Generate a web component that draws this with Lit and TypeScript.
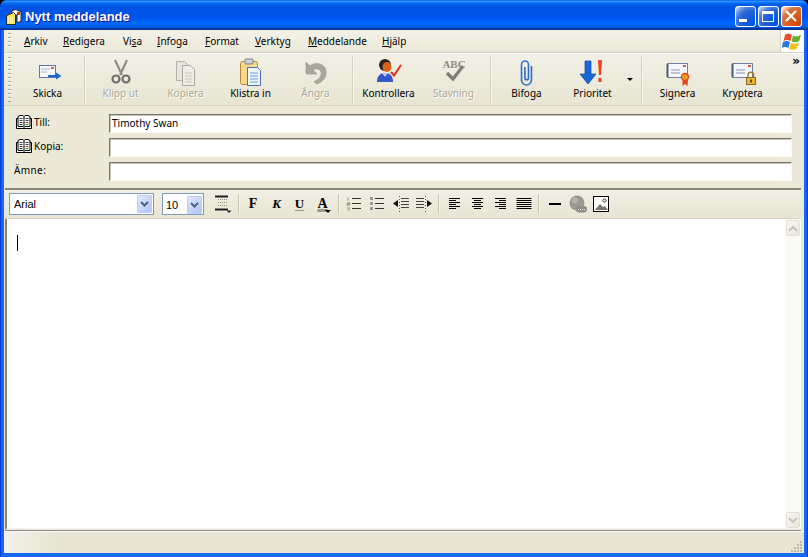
import { LitElement, html, css, svg } from "lit";
import { customElement } from "lit/decorators.js";

const send = svg`<rect x="6.500" y="7.500" width="16" height="12" fill="#f4f7fd" stroke="#5f76a8"/><path d="M8 11h9M8 14h6" stroke="#a9b8d4"/><rect x="18" y="9" width="3" height="2" fill="#d8643c"/><path d="M15 17h8v-2.500l5.500 3.500-5.500 3.500V19h-8z" fill="#1f69c8"/>`;
const cut = svg`<g fill="none" stroke="#8e8e86" stroke-width="2.200"><path d="M9 2l7 15M21 2l-7 15"/><circle cx="10" cy="21" r="3.500" stroke="#6f6f68"/><circle cx="20" cy="21" r="3.500" stroke="#6f6f68"/></g>`;
const copy = svg`<path d="M5.500 3.500h8l4 4v15h-12z" fill="#e8e6dc" stroke="#b5b3a8"/><path d="M11.500 7.500h8l4 4v16h-12z" fill="#efeee6" stroke="#a9a79c"/><path d="M14 15h7M14 18h7M14 21h7M14 24h7" stroke="#c4c2b8"/>`;
const paste = svg`<rect x="4.500" y="3.500" width="17" height="23" rx="2" fill="#f6d98a" stroke="#b58a3c"/><rect x="9" y="1" width="8" height="5" rx="1" fill="#cfd2d8" stroke="#7b7f86"/><path d="M11.500 9.500h10l3 3v15h-13z" fill="#eef4fd" stroke="#4d72b8"/><path d="M14 15h8M14 18h8M14 21h8M14 24h8" stroke="#6e9be0"/>`;
const undo = svg`<path d="M5 4v12h11l-4-4c3-2 7-1 8 2 1 4-2 7-7 10l3 2c7-3 10-8 9-13-1-7-10-10-16-5L5 4z" fill="#a9a89f" stroke="#96958c" stroke-width=".6"/>`;
const check = svg`<circle cx="11" cy="7" r="6" fill="#2b2320"/><ellipse cx="13" cy="9" rx="4.500" ry="5" fill="#d8641c"/><path d="M3 24c0-7 4-9 8-9s8 2 8 9z" fill="#3557c8"/><path d="M8 15l3 4 3-4z" fill="#b9c8f0"/><path d="M17 14l3 3.500L27 7" fill="none" stroke="#e8321c" stroke-width="2"/>`;
const spell = svg`<text x="15" y="10" text-anchor="middle" font-family="Liberation Serif" font-weight="700" font-size="11" fill="#8e8d84">ABC</text><path d="M8 15l6 6 10-13" fill="none" stroke="#7f7e76" stroke-width="3.200"/>`;
const attach = svg`<path d="M19.500 8v14a5 5 0 0 1-10 0V6.500a3.500 3.500 0 0 1 7 0V20a1.800 1.800 0 0 1-3.600 0V9" fill="none" stroke="#2e6fc8" stroke-width="1.600"/>`;
const prio = svg`<path d="M7 3h6v13h5l-8 10-8-10h5z" fill="#1668d4" stroke="#0d4aa0" stroke-width=".7"/><path d="M20 2h4l-1 15h-2z" fill="#f0401c"/><rect x="20.500" y="20" width="3" height="4" fill="#f0401c"/>`;
const sign = svg`<rect x="4.500" y="5.500" width="20" height="14" fill="#f4f7fd" stroke="#6d7e9e"/><path d="M4.500 6v13" stroke="#4a5a7a" stroke-width="2"/><path d="M8 12h9M8 15h9" stroke="#8c97ab"/><rect x="20" y="7" width="3" height="2" fill="#d8643c"/><path d="M19.500 22v6l2.500-2 2.500 2 .5-6z" fill="#e8461c"/><circle cx="22" cy="19" r="3.500" fill="#f2a01c" stroke="#e8461c" stroke-width="1.400"/>`;
const crypt = svg`<rect x="4.500" y="5.500" width="20" height="14" fill="#f4f7fd" stroke="#6d7e9e"/><path d="M4.500 6v13" stroke="#4a5a7a" stroke-width="2"/><path d="M8 12h9M8 15h9" stroke="#8c97ab"/><rect x="20" y="7" width="3" height="2" fill="#d8643c"/><path d="M20 20v-3a2.800 2.800 0 0 1 5.600 0v3" fill="none" stroke="#9a7a28" stroke-width="1.400"/><rect x="18.500" y="19.500" width="9" height="7" fill="#e8b830" stroke="#8a6a1c"/><rect x="22" y="21.500" width="2" height="3" fill="#6a4a0c"/>`;

const book = html`<svg class="book" viewBox="0 0 16 14"><path d="M.5 3.500h1.500v-2l2-1h3l1 1 1-1h3l2 1v2h1.500v10h-15z" fill="#fff" stroke="#000"/><path d="M8 1.500v10.500M2 3v8.500h5l1 1 1-1h5V3" fill="none" stroke="#000"/><path d="M3.500 3.500h3M3.500 5.500h3M3.500 7.500h3M3.500 9.500h3M9.500 3.500h3M9.500 5.500h3" stroke="#444"/><path d="M9.500 7.500h3" stroke="#e02020"/><path d="M9.500 9.500h3" stroke="#20a020"/></svg>`;

const tools = [
  { label: "Skicka", icon: send, on: true },
  { sep: true },
  { label: "Klipp ut", icon: cut },
  { label: "Kopiera", icon: copy },
  { label: "Klistra in", icon: paste, on: true },
  { label: "Ångra", icon: undo },
  { sep: true },
  { label: "Kontrollera", icon: check, on: true },
  { label: "Stavning", icon: spell },
  { sep: true },
  { label: "Bifoga", icon: attach, on: true },
  { label: "Prioritet", icon: prio, on: true, drop: true },
  { sep: true },
  { label: "Signera", icon: sign, on: true },
  { label: "Kryptera", icon: crypt, on: true },
] as any[];

const fmt = {
  para: svg`<path d="M1 1.500h13M1 14.500h13" stroke="#222" stroke-width="2"/><path d="M4 4.500h9M4 7.500h9M4 10.500h9" stroke="#8f8f85" stroke-dasharray="1 1"/><path d="M12.500 15.500h5l-2.500 2.500z" fill="#222"/>`,
  num: svg`<path d="M2 2.500v3M1 8h3v1H1v1h3M1 13h3M2 15h2" stroke="#8a8a80" fill="none"/><path d="M6 3.500h9M6 8.500h9M6 13.500h9" stroke="#333"/>`,
  bul: svg`<path d="M1 2h3v3H1zM1 7h3v3H1zM1 12h3v3H1z" fill="#999"/><path d="M6 3.500h9M6 8.500h9M6 13.500h9" stroke="#333"/>`,
  outdent: svg`<path d="M9 3.500h8M9 6.500h8M9 9.500h8M9 12.500h8" stroke="#444"/><path d="M6 5v7L1 8.500z" fill="#111"/><path d="M7.500 1v16" stroke="#555" stroke-dasharray="1 2"/>`,
  indent: svg`<path d="M1 3.500h8M1 6.500h8M1 9.500h8M1 12.500h8" stroke="#444"/><path d="M12 5v7l5-3.500z" fill="#111"/><path d="M10.500 1v16" stroke="#555" stroke-dasharray="1 2"/>`,
  left: svg`<path d="M2 3.500h11M2 5.500h7M2 7.500h11M2 9.500h7M2 11.500h11M2 13.500h7" stroke="#000"/>`,
  center: svg`<path d="M2 3.500h11M4 5.500h7M2 7.500h11M4 9.500h7M2 11.500h11M4 13.500h7" stroke="#000"/>`,
  right: svg`<path d="M2 3.500h11M6 5.500h7M2 7.500h11M6 9.500h7M2 11.500h11M6 13.500h7" stroke="#000"/>`,
  just: svg`<path d="M.5 3.500h15M.5 5.500h15M.5 7.500h15M.5 9.500h15M.5 11.500h15M.5 13.500h15" stroke="#000"/>`,
  rule: svg`<rect x="2" y="8" width="12" height="2" fill="#000"/>`,
  link: svg`<circle cx="8" cy="8" r="7.500" fill="#9a9a90"/><circle cx="6" cy="5.500" r="3" fill="#b4b4ac"/><rect x="7" y="11" width="11" height="6.500" rx="3.200" fill="#8e8e86"/><path d="M9 14.500h7" stroke="#eee" stroke-dasharray="1 1"/>`,
  img: svg`<g transform="translate(1 1)"><rect x=".5" y=".5" width="15" height="15" fill="#fff" stroke="#000"/><path d="M2 14l5-6 3 3 2-1 3 4z" fill="#77776e"/><circle cx="11.500" cy="4.500" r="1.600" fill="#fff" stroke="#333"/></g>`,
};

const menus = [
  ["", "A", "rkiv"],
  ["", "R", "edigera"],
  ["Vi", "s", "a"],
  ["", "I", "nfoga"],
  ["", "F", "ormat"],
  ["", "V", "erktyg"],
  ["", "M", "eddelande"],
  ["", "H", "jälp"],
];

@customElement("app-root")
export class AppRoot extends LitElement {
  static styles = css`
    :host { display: block; width: 808px; height: 557px; overflow: hidden; font: 10px "Noto Sans", "Liberation Sans", sans-serif; color: #000; background: #000; }
    .win { display: flex; flex-direction: column; height: 557px; border-radius: 7px 7px 0 0; overflow: hidden; background: linear-gradient(90deg, #0831d9 0, #166aee 2px, #166aee 806px, #0831d9 808px); }
    .title { height: 30px; flex: none; display: flex; align-items: center; padding: 3px 6px 0 6px; box-sizing: border-box;
      background: linear-gradient(180deg, #0058ee 0%, #3593ff 4%, #288eff 6%, #127dff 8%, #036ffc 10%, #0262ee 14%, #0057e5 20%, #0054e3 24%, #0055eb 56%, #005bf5 66%, #026afe 76%, #0062ef 86%, #0052d6 92%, #0040ab 94%, #003092 100%); }
    .appicon { width: 16px; height: 16px; margin-right: 3px; flex: none; }
    .title-text { flex: 1; color: #fff; font: 700 13px "Liberation Sans", sans-serif; text-shadow: 1px 1px 0 #0f1089; }
    .caps { display: flex; gap: 2px; }
    .cap { width: 21px; height: 21px; box-sizing: border-box; border: 1px solid #fff; border-radius: 3px; display: flex; align-items: center; justify-content: center;
      background: radial-gradient(circle at 90% 90%, #0054e9 0%, #2263d5 55%, #4479e4 70%, #a3bbec 90%, #fff 100%); }
    .cap.close { background: radial-gradient(circle at 90% 90%, #cc4600 0%, #dc6527 55%, #cd7546 70%, #ffccb2 90%, #fff 100%); }
    .cap svg { width: 21px; height: 21px; display: block; flex: none; }
    .body { flex: 1; min-height: 0; display: flex; flex-direction: column; margin: 0 4px 4px 4px; background: #ece9d8; }
    .menubar { height: 23px; flex: none; display: flex; box-sizing: border-box; border-bottom: 1px solid #d4d0c0; background: linear-gradient(#f3f1e6, #ece9d8); }
    .grip { width: 3px; flex: none; margin: 3px 0 3px 4px; background: repeating-linear-gradient(#a8a696 0 1px, #fff 1px 2px, transparent 2px 4px); }
    .menus { flex: 1; display: grid; grid-template-columns: 39px 60px 34px 48px 50px 53px 74px 40px; justify-content: start; padding-left: 13px; align-items: center; }
    .menus span u { text-underline-offset: 1px; }
    .logo { width: 23px; flex: none; background: #fff; display: flex; align-items: center; justify-content: center; border-left: 1px solid #d4d0c0; }
    .logo svg { width: 21px; height: 20px; display: block; }
    .toolbar { height: 53px; flex: none; display: flex; position: relative; border-top: 1px solid #fff; border-bottom: 1px solid #d8d4c2; box-sizing: border-box; background: linear-gradient(#f2f0e6, #e8e5d3); }
    .tools { flex: 1; display: flex; padding-left: 4px; }
    .btn { width: 65px; flex: none; display: flex; flex-direction: column; align-items: center; padding-top: 4px; box-sizing: border-box; position: relative; }
    .btn svg { width: 30px; height: 30px; display: block; }
    .btn .lbl { margin-top: -2px; white-space: nowrap; }
    .btn.off .lbl { color: #a9a799; text-shadow: 1px 1px 0 #fff; }
    .btn.drop { width: 77px; margin-left: 1px; padding-right: 12px; }
    .caret { position: absolute; right: 4px; top: 24px; width: 0; height: 0; border: 3px solid transparent; border-top: 3px solid #000; border-bottom: 0; }
    .sep { width: 2px; flex: none; margin: 2px 2px 0 4px; height: 48px; background: #d6d2bf; border-right: 1px solid #f6f5ee; box-sizing: border-box; }
    .more { position: absolute; right: 4px; top: 2px; font: 700 12px "DejaVu Sans", sans-serif; line-height: 10px; }
    .fields { height: 82px; flex: none; box-sizing: border-box; padding-top: 8px; display: grid; grid-template-rows: repeat(3, 19px); row-gap: 5px; }
    .row { display: grid; grid-template-columns: 105px 683px; align-items: center; }
    .label { display: flex; align-items: center; padding: 0 0 3px 12px; gap: 2px; }
    .label.plain { padding-left: 10px; letter-spacing: .4px; }
    .book { width: 16px; height: 14px; flex: none; display: block; }
    .input { height: 19px; box-sizing: border-box; background: #fff; border: 1px solid; border-color: #777567 #fbfaf5 #fbfaf5 #777567; box-shadow: inset 1px 1px 0 #c8c5b4; padding-left: 2px; line-height: 16px; white-space: nowrap; }
    .editor { flex: 1; min-height: 0; display: flex; flex-direction: column; margin-left: 1px; box-sizing: border-box; }
    .fmt { height: 31px; flex: none; display: flex; align-items: center; box-sizing: border-box; margin-right: 3px; padding: 0 0 0 4px; border-top: 2px solid #86847a; border-bottom: 1px solid #d8d4c2; background: linear-gradient(#f1efe4, #e8e5d3); }
    .combo { height: 22px; box-sizing: border-box; border: 1px solid #7f9db9; background: #fff; display: flex; align-items: center; padding-left: 4px; justify-content: space-between; flex: none; font: 11px "Liberation Sans", sans-serif; }
    .combo.font { width: 145px; }
    .combo.size { width: 42px; margin-left: 8px; padding-left: 3px; padding-top: 1px; }
    .arrow { width: 15px; height: 18px; margin-right: 1px; border-radius: 1px; background: linear-gradient(135deg, #e1eafe, #afc4f5); border: 1px solid #bccdf5; box-sizing: border-box; display: flex; align-items: center; justify-content: center; }
    .arrow svg { width: 9px; height: 6px; display: block; }
    .fi { width: 23px; height: 22px; flex: none; display: flex; align-items: center; justify-content: center; font: 700 14px "Liberation Serif", serif; position: relative; }
    .fi svg { width: 18px; height: 18px; display: block; }
    .fi.para { margin-left: 7px; }
    .fi.f { width: 24px; }
    .fi.u { font-size: 13px; text-decoration: underline; text-decoration-color: #9a9a90; text-underline-offset: 2px; }
    .fi.i { font-style: italic; font-size: 13px; }
    .fi.a { font-size: 14px; text-decoration: underline 3px #9a9a90; text-underline-offset: 1px; }
    .fi.a::after { content: ""; position: absolute; right: 3px; bottom: 2px; border: 3px solid transparent; border-top-color: #000; border-bottom: 0; }
    .fs { width: 1px; height: 20px; flex: none; background: #c5c2ae; box-shadow: 1px 0 0 #f6f5ee; margin: 0 4px 0 3px; }
    .fs.first { margin: 0 2px 0 4px; }
    .fs.second { margin: 0 4px; }
    .doc { flex: 1; min-height: 0; display: flex; margin: 0 3px 1px 0; border-left: 2px solid #86847a; border-bottom: 2px solid #f2f0e6; box-shadow: 0 1px 0 #86847a; background: #fff; box-sizing: border-box; }
    .text { flex: 1; position: relative; }
    .cursor { position: absolute; left: 10px; top: 16px; width: 1px; height: 16px; background: #000; }
    .scroll { width: 16px; flex: none; background: #fbfaf5; display: flex; flex-direction: column; justify-content: space-between; padding: 1px 1px 0 1px; box-sizing: border-box; }
    .sb { width: 14px; height: 16px; box-sizing: border-box; border: 1px solid #e3e1d5; border-radius: 2px; background: linear-gradient(135deg, #f8f7f1, #e9e7db); display: flex; align-items: center; justify-content: center; }
    .sb svg { width: 10px; height: 7px; display: block; }
    .status { height: 22px; flex: none; position: relative; background: linear-gradient(90deg, #f3f2ea 0, #e8e5d3 50px, #e8e5d3 100%); border-top: 1px solid #fff; box-sizing: border-box; }
    .resize { position: absolute; right: 1px; bottom: 1px; width: 12px; height: 12px; }
  `;

  render() {
    return html`<div class="win">
      <div class="title">
        <svg class="appicon" viewBox="0 0 16 16"><path d="M6 1.500l4-1 1 1 4 1v10l-4 1V6L6 5z" fill="#fff" stroke="#2a2a22"/><path d="M.5 6.500l7-3 2 2v10h-9z" fill="#f4e75a" stroke="#2a2a22"/><rect x="11" y="3" width="3" height="3" fill="#d03020"/><path d="M2 9h6M2 11h6M2 13h6" stroke="#fff" stroke-dasharray="1 1"/></svg>
        <div class="title-text">Nytt meddelande</div>
        <div class="caps">
          <div class="cap"><svg viewBox="0 0 21 21"><rect x="4" y="13" width="8" height="3" fill="#fff"/></svg></div>
          <div class="cap"><svg viewBox="0 0 21 21"><rect x="4.500" y="5.500" width="11" height="10" fill="none" stroke="#fff"/><rect x="4" y="5" width="12" height="3" fill="#fff"/></svg></div>
          <div class="cap close"><svg viewBox="0 0 21 21"><path d="M5 5l10 10M15 5L5 15" stroke="#fff" stroke-width="2.200"/></svg></div>
        </div>
      </div>
      <div class="body">
        <div class="menubar">
          <div class="grip"></div>
          <div class="menus">${menus.map((m) => html`<span>${m[0]}<u>${m[1]}</u>${m[2]}</span>`)}</div>
          <div class="logo"><svg viewBox="0 0 21 20"><path d="M3 4c3-2 5-1 7 0l-1.500 6c-2-1-4-1.500-7 0z" fill="#e8502c"/><path d="M11 4.500c3 1.500 5 1 8-.5l-1.700 6c-3 1.500-5 1.500-7.800.5z" fill="#6cb030"/><path d="M1 11c3-1.500 5-1 7 0L6.500 17c-2-1-4-1.500-7 0z" fill="#2a78d8"/><path d="M8.800 12c3 1 5 1 8-.5L15 17.500c-3 1.500-5 1.500-7.800.5z" fill="#f4c020"/></svg></div>
        </div>
        <div class="toolbar">
          <div class="grip"></div>
          <div class="tools">
            ${tools.map((t) =>
              t.sep
                ? html`<div class="sep"></div>`
                : html`<div class="btn ${t.on ? "" : "off"} ${t.drop ? "drop" : ""}">
                    <svg viewBox="0 0 30 30">${t.icon}</svg>
                    <div class="lbl">${t.label}</div>
                    ${t.drop ? html`<div class="caret"></div>` : ""}
                  </div>`
            )}
          </div>
          <div class="more">»</div>
        </div>
        <div class="fields">
          <div class="row"><div class="label">${book}<span>Till:</span></div><div class="input">Timothy Swan</div></div>
          <div class="row"><div class="label">${book}<span>Kopia:</span></div><div class="input"></div></div>
          <div class="row"><div class="label plain">Ämne:</div><div class="input"></div></div>
        </div>
        <div class="editor">
          <div class="fmt">
            <div class="combo font"><span>Arial</span><span class="arrow"><svg viewBox="0 0 9 6"><path d="M1 1l3.500 3.500L8 1" fill="none" stroke="#4d6185" stroke-width="2"/></svg></span></div>
            <div class="combo size"><span>10</span><span class="arrow"><svg viewBox="0 0 9 6"><path d="M1 1l3.500 3.500L8 1" fill="none" stroke="#4d6185" stroke-width="2"/></svg></span></div>
            <div class="fi para"><svg viewBox="0 0 18 18">${fmt.para}</svg></div>
            <div class="fs first"></div>
            <div class="fi f">F</div>
            <div class="fi i">K</div>
            <div class="fi u">U</div>
            <div class="fi a">A</div>
            <div class="fs second"></div>
            <div class="fi"><svg viewBox="0 0 18 18">${fmt.num}</svg></div>
            <div class="fi"><svg viewBox="0 0 18 18">${fmt.bul}</svg></div>
            <div class="fi"><svg viewBox="0 0 18 18">${fmt.outdent}</svg></div>
            <div class="fi"><svg viewBox="0 0 18 18">${fmt.indent}</svg></div>
            <div class="fs"></div>
            <div class="fi"><svg viewBox="0 0 16 18">${fmt.left}</svg></div>
            <div class="fi"><svg viewBox="0 0 16 18">${fmt.center}</svg></div>
            <div class="fi"><svg viewBox="0 0 16 18">${fmt.right}</svg></div>
            <div class="fi"><svg viewBox="0 0 16 18">${fmt.just}</svg></div>
            <div class="fs"></div>
            <div class="fi"><svg viewBox="0 0 16 18">${fmt.rule}</svg></div>
            <div class="fi"><svg viewBox="0 0 18 18">${fmt.link}</svg></div>
            <div class="fi"><svg viewBox="0 0 18 18">${fmt.img}</svg></div>
          </div>
          <div class="doc">
            <div class="text"><div class="cursor"></div></div>
            <div class="scroll">
              <div class="sb"><svg viewBox="0 0 10 7"><path d="M1 6l4-4 4 4" fill="none" stroke="#c6c5bc" stroke-width="2.200"/></svg></div>
              <div class="sb"><svg viewBox="0 0 10 7"><path d="M1 1l4 4 4-4" fill="none" stroke="#c6c5bc" stroke-width="2.200"/></svg></div>
            </div>
          </div>
        </div>
        <div class="status">
          <svg class="resize" viewBox="0 0 12 12"><path d="M9 1h2v2H9zM6 4h2v2H6zM9 4h2v2H9zM3 7h2v2H3zM6 7h2v2H6zM9 7h2v2H9zM0 10h2v2H0zM3 10h2v2H3zM6 10h2v2H6zM9 10h2v2H9z" fill="#bdb9a6"/></svg>
        </div>
      </div>
    </div>`;
  }
}
